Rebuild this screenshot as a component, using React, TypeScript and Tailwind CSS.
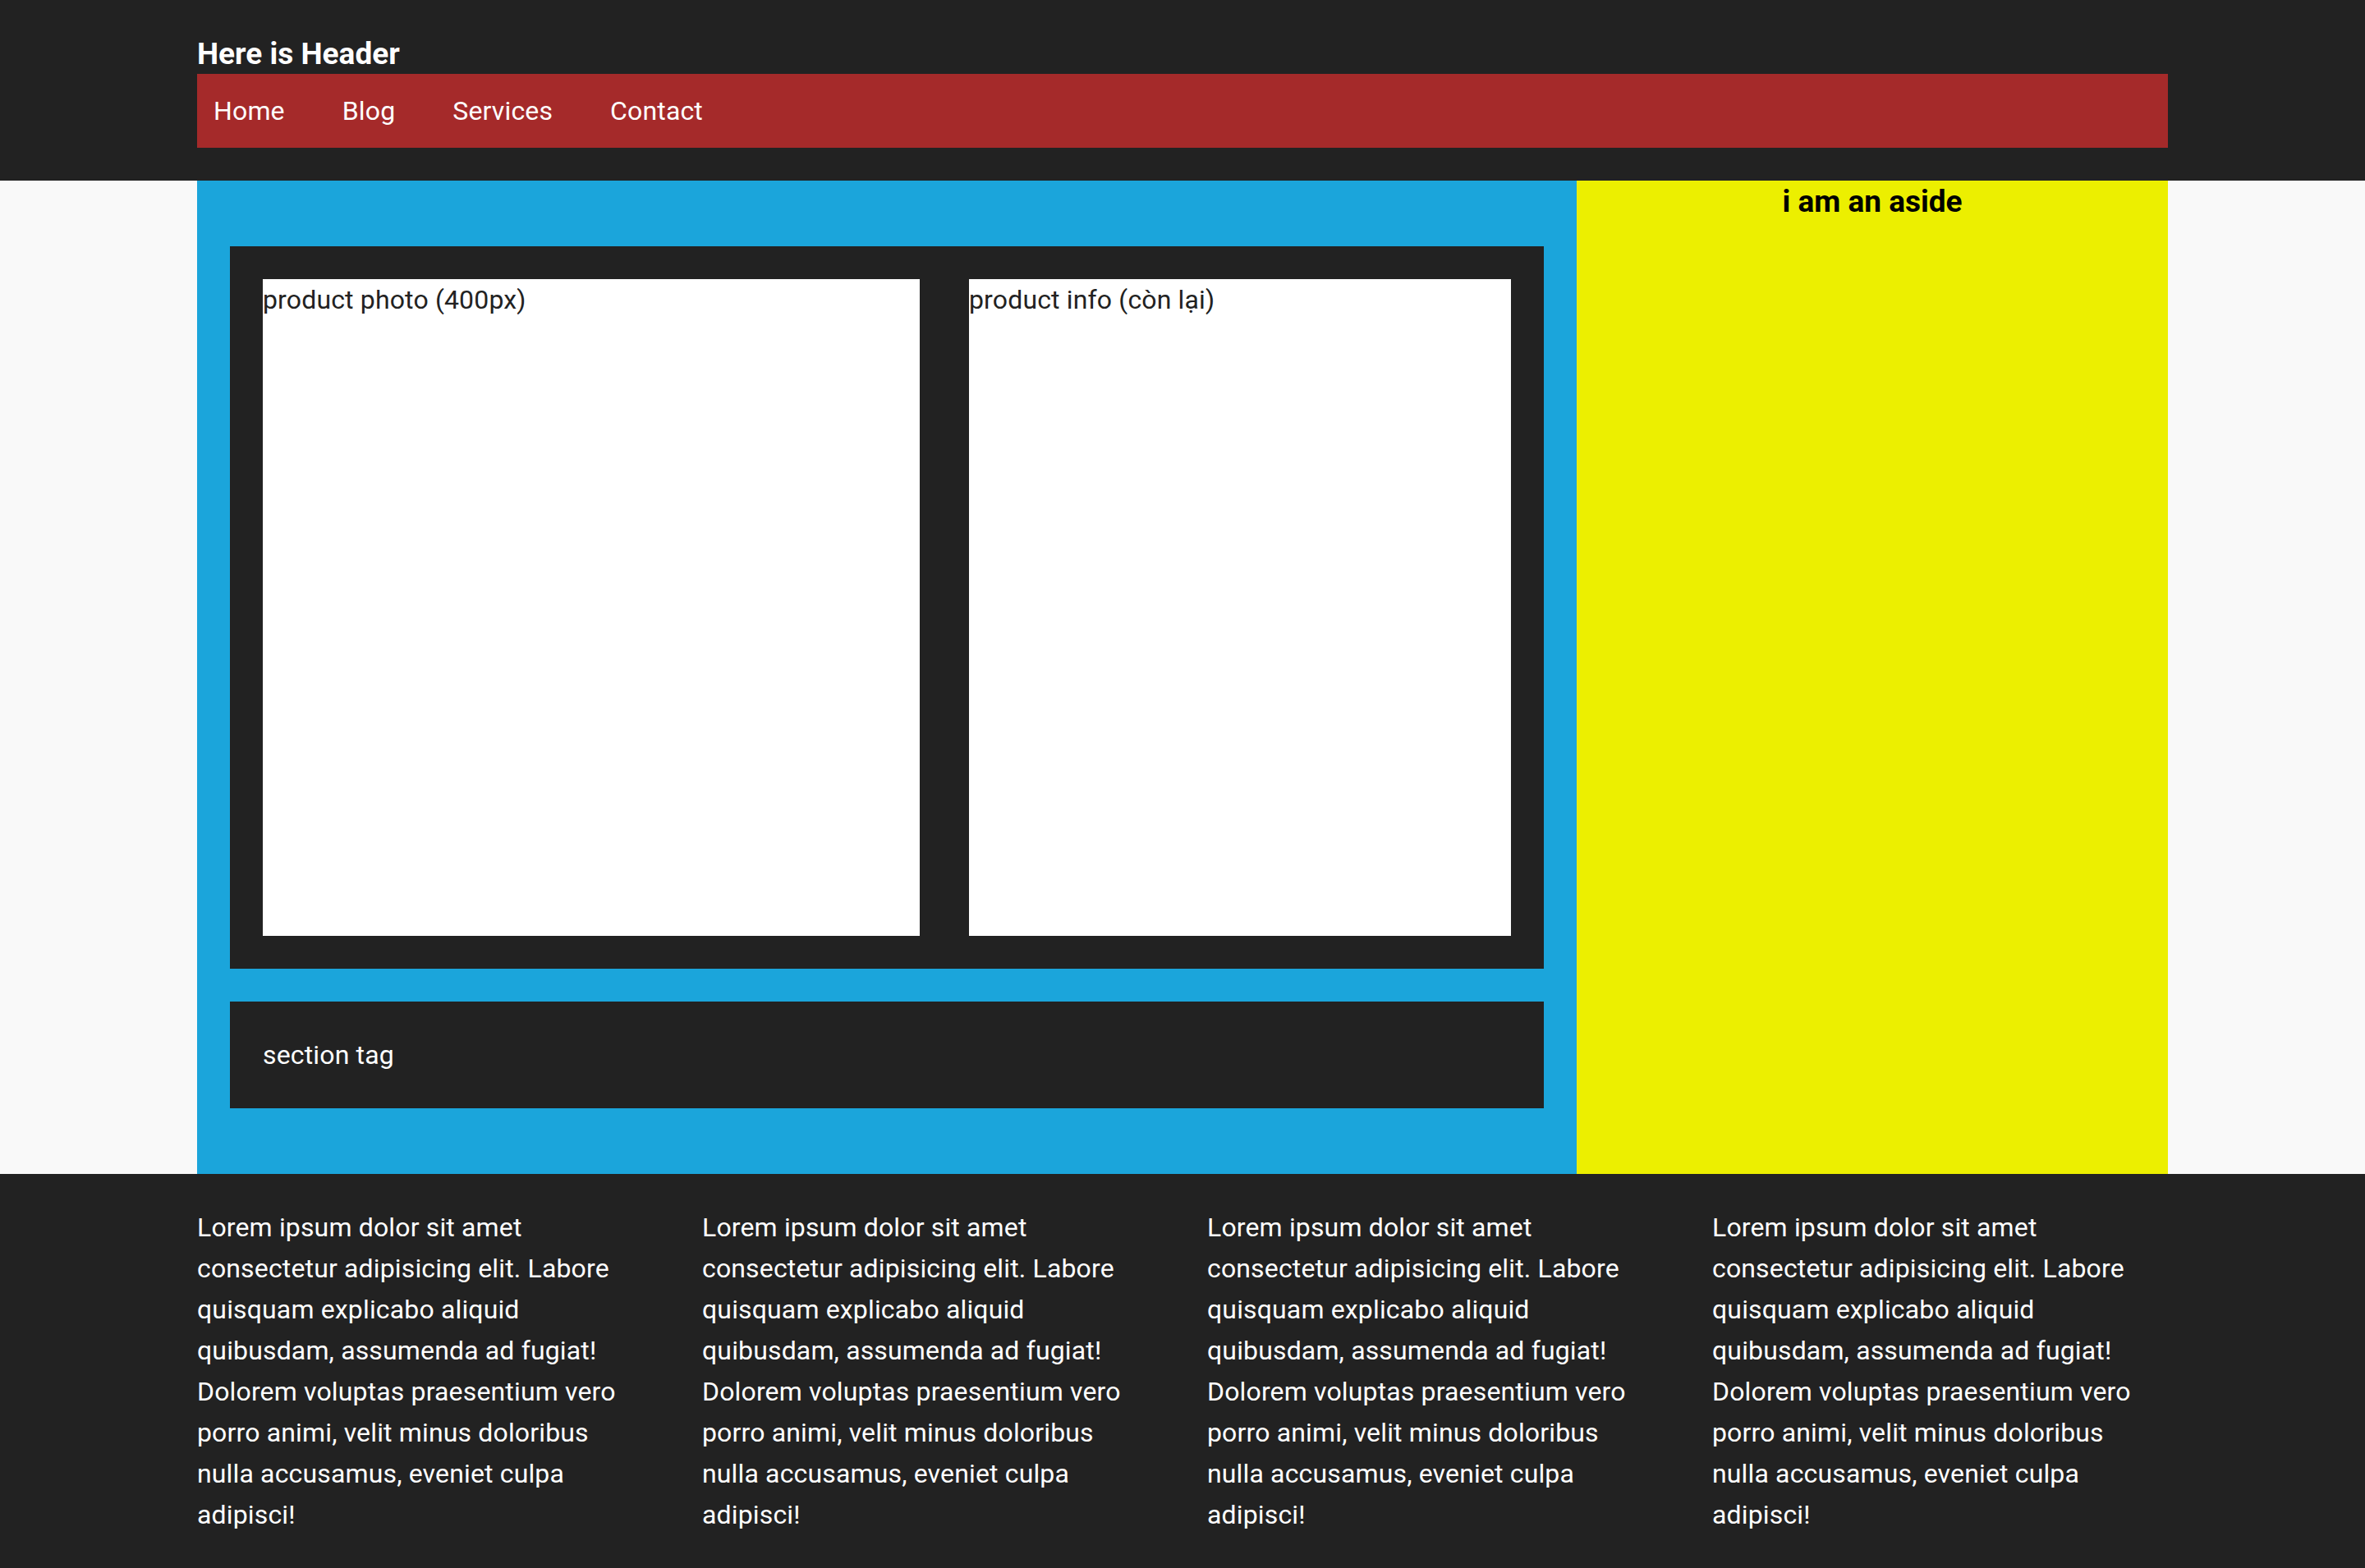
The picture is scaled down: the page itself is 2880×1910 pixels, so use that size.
import React from 'react';

const lorem =
  'Lorem ipsum dolor sit amet consectetur adipisicing elit. Labore quisquam explicabo aliquid quibusdam, assumenda ad fugiat! Dolorem voluptas praesentium vero porro animi, velit minus doloribus nulla accusamus, eveniet culpa adipisci!';

const navLinks = ['Home', 'Blog', 'Services', 'Contact'];

export default function App() {
  return (
    <div className="min-h-screen bg-[#f9f9f9] font-['Roboto',sans-serif] text-[32px] leading-[50px] tracking-[0.15px] text-[#222]">
      {/* header */}
      <header className="bg-[#222] pt-[42px] pb-[40px]">
        <div className="mx-auto w-[2400px]">
          <h3 className="text-[37px] leading-[48px] font-bold tracking-normal text-white">Here is Header</h3>
          <nav className="flex h-[90px] items-center bg-[#a52a2a] px-[20px]">
            <ul className="flex gap-[70px]">
              {navLinks.map((link) => (
                <li key={link}>
                  <a href="#" className="text-[32px] leading-[90px] text-white">
                    {link}
                  </a>
                </li>
              ))}
            </ul>
          </nav>
        </div>
      </header>

      {/* main + aside */}
      <div className="mx-auto grid w-[2400px] grid-cols-[1680px_720px]">
        <main className="bg-[#1ba5db] px-[40px] py-[80px]">
          <div className="flex gap-[60px] bg-[#222] p-[40px]">
            <div className="h-[800px] w-[800px] shrink-0 bg-white">product photo (400px)</div>
            <div className="h-[800px] flex-1 bg-white">product info (còn lại)</div>
          </div>
          <section className="mt-[40px] bg-[#222] p-[40px] text-white">section tag</section>
        </main>
        <aside className="bg-[#ecef00] text-center">
          <h3 className="pt-[1px] text-[37px] font-bold tracking-normal text-black">i am an aside</h3>
        </aside>
      </div>

      {/* footer */}
      <footer className="bg-[#222] py-[40px] text-white">
        <div className="mx-auto grid w-[2400px] grid-cols-[545px_545px_545px_545px] gap-[70px]">
          {[0, 1, 2, 3].map((i) => (
            <p key={i}>{lorem}</p>
          ))}
        </div>
      </footer>
    </div>
  );
}
